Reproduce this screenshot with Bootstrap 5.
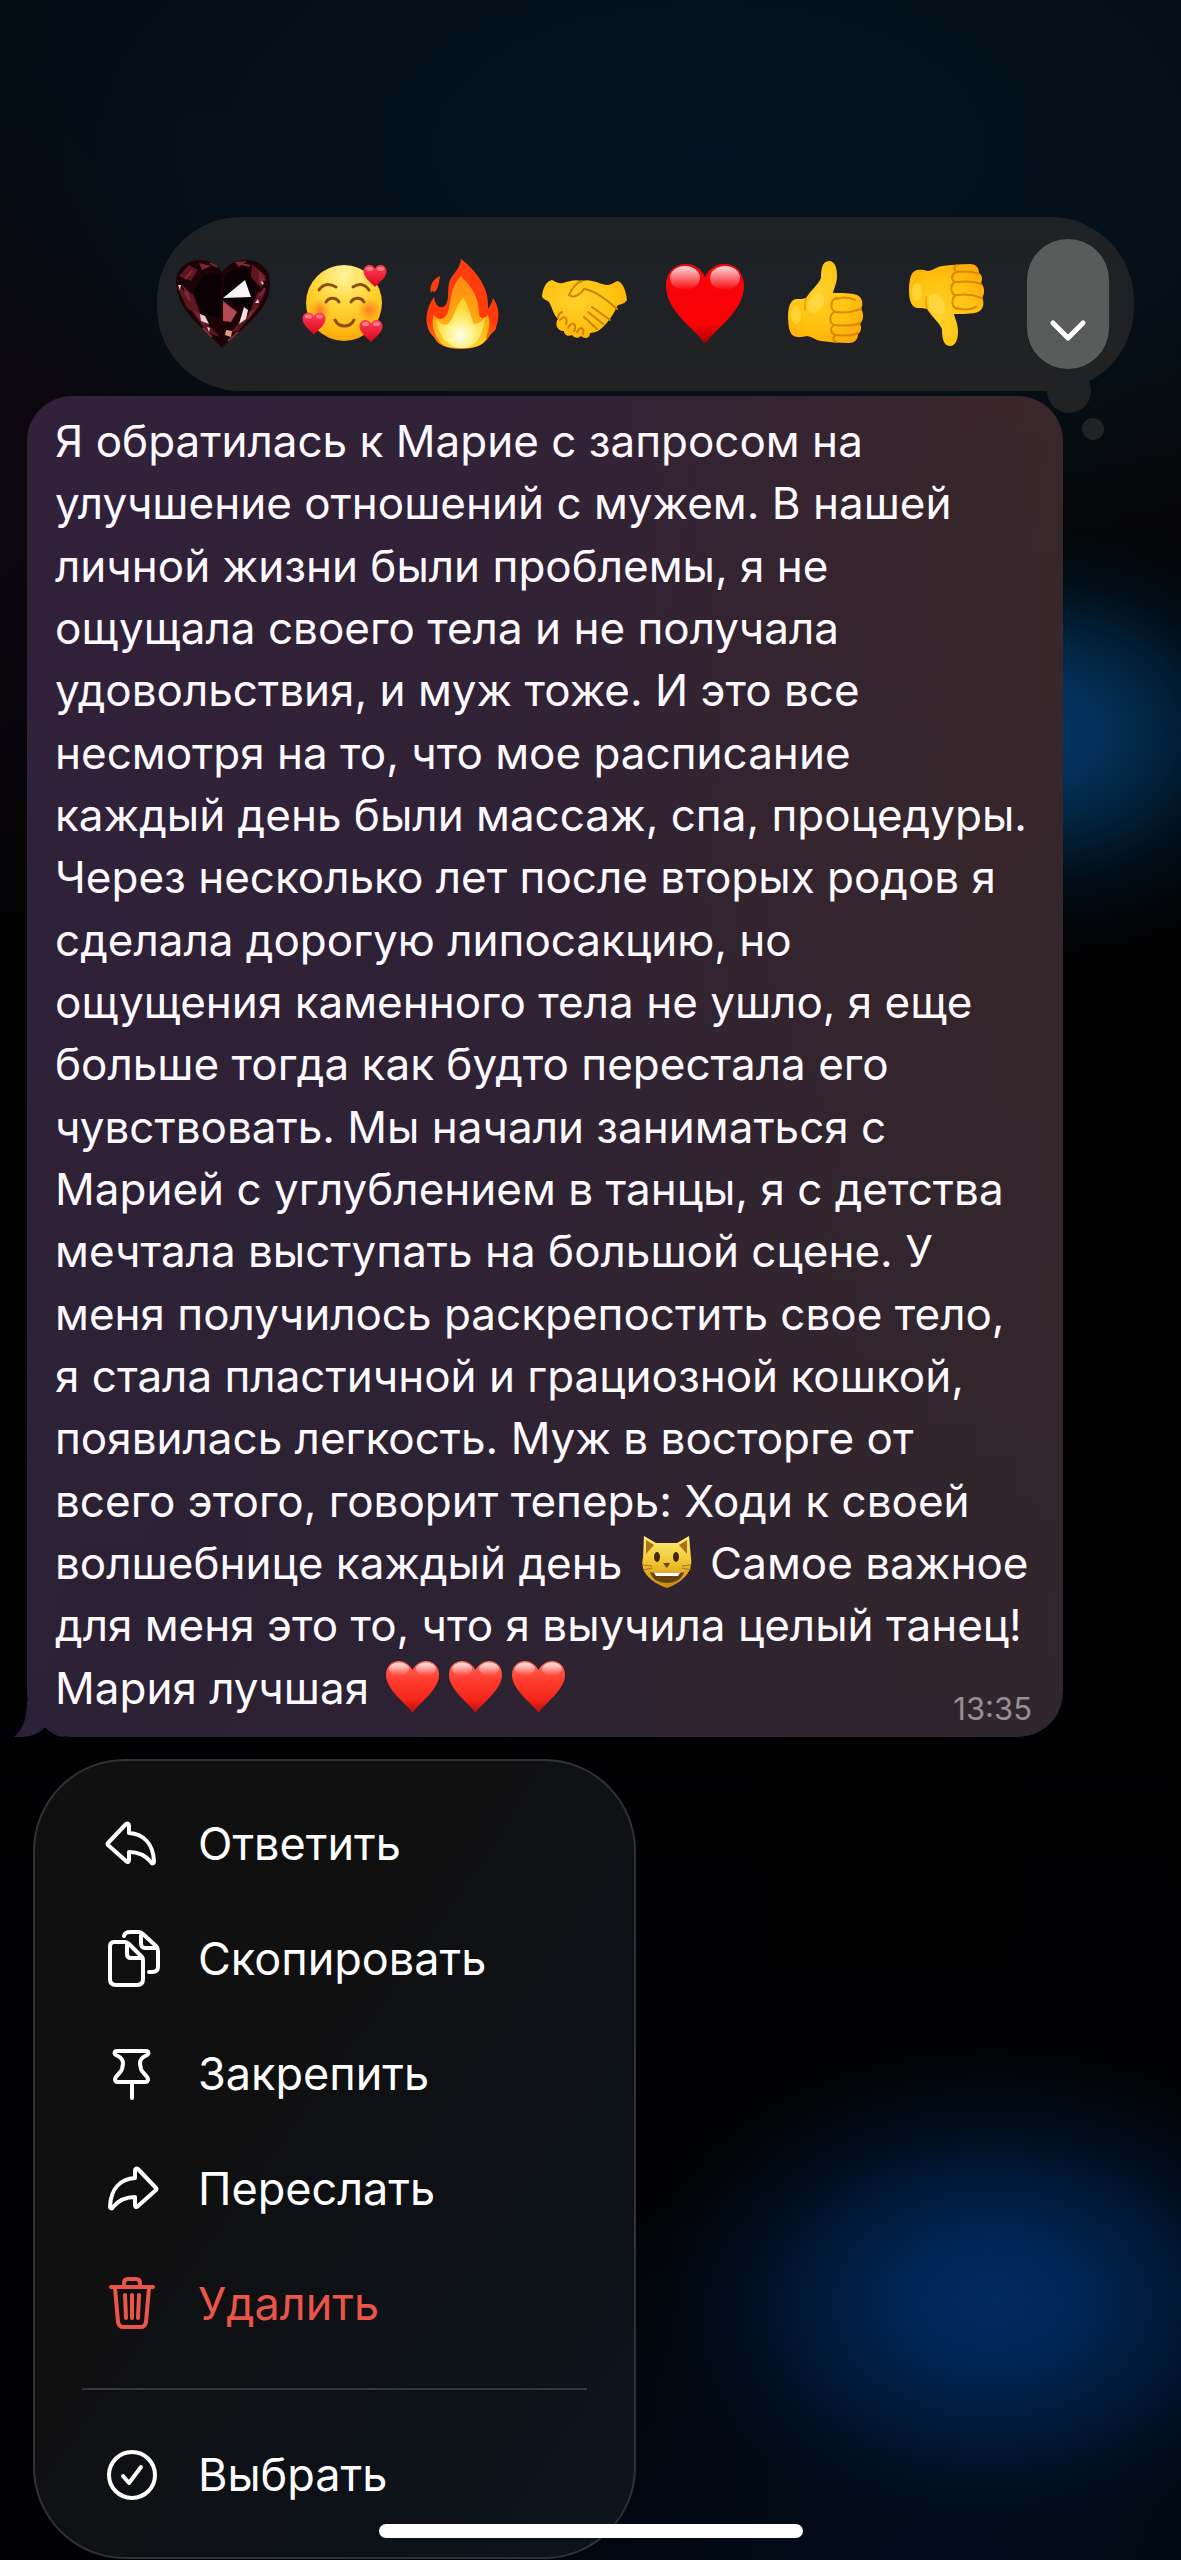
<!DOCTYPE html>
<html lang="ru" data-bs-theme="dark">
<head>
<meta charset="utf-8">
<meta name="viewport" content="width=device-width, initial-scale=1">
<title>Сообщение</title>
<link href="https://cdn.jsdelivr.net/npm/bootstrap@5.3.0/dist/css/bootstrap.min.css" rel="stylesheet">
<style>
body{font-family:Inter,"Noto Sans",sans-serif;color:#fcf9ff;background-color:#010103;
background-image:
radial-gradient(ellipse 380px 270px at 84% 2300px,#002b60 0%,rgba(0,40,90,.92) 24%,rgba(0,32,72,.75) 46%,rgba(0,22,48,.5) 66%,rgba(0,12,26,.25) 84%,transparent 100%),
radial-gradient(ellipse 700px 400px at 80% 2560px,#020d1c 0%,transparent 100%),
radial-gradient(ellipse 300px 230px at 88% 732px,#00365f 0%,#03305a 20%,rgba(2,38,66,.9) 42%,rgba(0,24,42,.6) 64%,rgba(0,10,20,.3) 84%,transparent 100%),
radial-gradient(ellipse 180px 420px at 0 520px,#0d0710 0%,transparent 100%),
radial-gradient(ellipse 820px 430px at 60% 150px,#04131f 0%,#04111b 50%,transparent 100%),
linear-gradient(#020a11 0,#070b10 260px,#08090b 400px,#020203 620px,#010103 100%)}
.screen{padding-top:217px}
.reactions{margin:0 47px 0 157px;height:174px;border-radius:84px;padding:0 25px 0 6px;background:linear-gradient(#1e2224,#1e2125 45%,#222223)}
.reactions::before,.reactions::after{content:"";position:absolute;border-radius:50%;background:#212223}
.reactions::before{width:44px;height:44px;right:43px;bottom:-22px}
.reactions::after{width:22px;height:22px;right:30px;bottom:-49px}
.reaction{background:none;border:0;padding:0;text-align:center}
.reaction svg{width:100px;height:100px}
.expand{width:82px;height:130px;border-radius:41px;background:#5a5b5b;border:0;padding:0 0 18px;margin-left:21px}
.bubble{margin:5px 118px 0 27px;padding:14px 31px 18px 28px;border-radius:45px;font-size:44px;
background:linear-gradient(rgba(38,34,54,0) 0,rgba(38,34,48,.5) 100%),linear-gradient(97deg,#31213a 0%,#322236 45%,#38262c 78%,#3a2929 100%)}
.bubble-line{display:block;line-height:62px;white-space:nowrap}
.bubble-line:nth-child(3n){line-height:63px}
.tail{left:-13px;bottom:0;width:56px;height:36px}
.emo{width:63px;height:54px;vertical-align:-10px}
.stamp{font-size:31px;line-height:20px;color:#988f94}
.menu{width:603px;margin:22px 0 0 33px;padding:25px 0 25px;border:2px solid #303336;border-radius:92px;
background:linear-gradient(125deg,#101011 40%,#0d1118 70%,#0d141b 100%)}
.menu-row{height:115px;padding:0 0 0 66px;gap:37px;border:0;background:none;color:#fff;font-size:45px;line-height:56px}
.menu-row svg{width:60px;height:60px;flex:none;fill:none;stroke:currentColor;stroke-width:4;stroke-linecap:round;stroke-linejoin:round}
.menu-row.delete{color:#ea5549}
.menu-rule{height:2px;background:#34373b;margin:27px 47px}
.home-bar{width:424px;height:14px;border-radius:7px;background:#fff;bottom:22px;left:50%;margin-left:-212px}
.hidden-defs{width:0;height:0}
</style>
<script src="https://cdn.jsdelivr.net/npm/bootstrap@5.3.0/dist/js/bootstrap.bundle.min.js"></script>
</head>
<body class="position-relative min-vh-100">
<svg class="hidden-defs position-absolute" aria-hidden="true">
<defs>
<radialGradient id="gface" cx=".5" cy=".12" r=".95"><stop offset="0" stop-color="#fff5a0"/><stop offset=".4" stop-color="#ffd83d"/><stop offset=".8" stop-color="#ffb90f"/><stop offset="1" stop-color="#f59a0a"/></radialGradient>
<radialGradient id="gblush"><stop offset="0" stop-color="#ff6a1c" stop-opacity=".85"/><stop offset="1" stop-color="#ff8a1c" stop-opacity="0"/></radialGradient>
<linearGradient id="gheart" x1="0" y1="0" x2="0" y2="1"><stop offset="0" stop-color="#ff4055"/><stop offset="1" stop-color="#d9061e"/></linearGradient>
<linearGradient id="gred" x1="0" y1="0" x2="0" y2="1"><stop offset="0" stop-color="#f5050c"/><stop offset=".75" stop-color="#fb0204"/><stop offset="1" stop-color="#a30308"/></linearGradient>
<linearGradient id="gsoft" x1="0" y1="0" x2="0" y2="1"><stop offset="0" stop-color="#ff6a5c"/><stop offset=".4" stop-color="#ff3a2c"/><stop offset=".75" stop-color="#f42518"/><stop offset="1" stop-color="#b3100c"/></linearGradient>
<linearGradient id="gshine" x1="0" y1="0" x2="0" y2="1"><stop offset="0" stop-color="#fff" stop-opacity=".85"/><stop offset="1" stop-color="#fff" stop-opacity="0"/></linearGradient>
<linearGradient id="gfire" x1="0" y1="0" x2="0" y2="1"><stop offset="0" stop-color="#ff3d12"/><stop offset=".7" stop-color="#ff3a08"/><stop offset="1" stop-color="#ff8a10"/></linearGradient>
<linearGradient id="gflame" x1="0" y1="0" x2="0" y2="1"><stop offset="0" stop-color="#ff8a12"/><stop offset=".6" stop-color="#ffa812"/><stop offset="1" stop-color="#ffd52a"/></linearGradient>
<radialGradient id="gcore" cx=".5" cy=".75" r=".6"><stop offset="0" stop-color="#fffef0"/><stop offset=".5" stop-color="#fff07a"/><stop offset="1" stop-color="#ffd42a"/></radialGradient>
<radialGradient id="ghand" cx=".4" cy=".35" r=".75"><stop offset="0" stop-color="#ffd02c"/><stop offset=".6" stop-color="#ffc30f"/><stop offset="1" stop-color="#ffa90a"/></radialGradient>
<linearGradient id="gcat" x1="0" y1="0" x2="0" y2="1"><stop offset="0" stop-color="#fff07c"/><stop offset=".5" stop-color="#f2c532"/><stop offset="1" stop-color="#c88616"/></linearGradient>
<symbol id="mini-heart" viewBox="0 0 24 24"><path d="M12 23C7 18 .5 13 .5 7.500 .5 3.500 3.300 1 6.500 1 9 1 11 2.500 12 4.600 13 2.500 15 1 17.500 1 20.700 1 23.500 3.500 23.500 7.500 23.500 13 17 18 12 23Z" fill="url(#gheart)"/><ellipse cx="6.500" cy="5" rx="3.500" ry="2" fill="#ff9aa5" opacity=".7"/><ellipse cx="17.500" cy="5" rx="3.500" ry="2" fill="#ff9aa5" opacity=".7"/></symbol>
<symbol id="text-heart" viewBox="0 0 63 54"><path d="M31.500 53C25 43 5 30 5 15 5 6 11 1 18 1c6 0 11 4 13.500 9C34 5 39 1 45 1c7 0 13 5 13 14 0 15-20 28-26.500 38Z" fill="url(#gsoft)"/><ellipse cx="18" cy="9" rx="10" ry="6.500" fill="url(#gshine)"/><ellipse cx="45" cy="9" rx="10" ry="6.500" fill="url(#gshine)"/></symbol>
<symbol id="thumb" viewBox="0 0 100 100">
<path d="M13 62C13 52 16 45 22 45 26 45 28 45 31 44 36 36 43 31 46 24 46 16 47 7 54 7 60 7 62 14 62 22 62 29 59 34 58 39 66 39 76 39 82 41 87 43 89 50 86 55 89 59 89 66 85 70 87 74 86 78 83 80 83 86 79 89 74 89 64 89 54 88 46 87 40 86 38 83 32 82 27 83 22 84 19 82 14 80 13 70 13 62Z" fill="url(#ghand)"/>
<path d="M61 44C54 47 56 57 61 58 69 59 78 58 86 55M59 58C54 61 54 70 60 71 69 72 78 72 85 69M59 71C54 74 56 80 61 81 69 82 77 82 83 79M61 81C57 83 58 87 61 88M61 45C67 43 74 43 80 46" fill="none" stroke="#d98a06" stroke-width="2" stroke-linecap="round"/>
<ellipse cx="21" cy="61" rx="5" ry="9" fill="#ffe04f" opacity=".55"/><ellipse cx="41" cy="49" rx="7" ry="11" transform="rotate(30 41 49)" fill="#ffe25a" opacity=".5"/><path d="M31 45c-2 4-1 7-1 11" stroke="#f3a50c" stroke-width="2" fill="none" stroke-linecap="round"/>
</symbol>
</defs>
</svg>

<main class="screen d-flex flex-column align-items-stretch">
<div class="reactions d-flex align-items-center position-relative" role="toolbar" aria-label="Реакции">
<button class="reaction flex-fill" type="button" aria-label="Сердце-кристалл"><svg viewBox="0 0 100 100">
<path d="M49 94C38 80 3 58 3 29 3 15 14 6 27 6c10 0 18 5 22 12C54 11 62 6 73 6c14 0 24 9 24 24 0 29-34 48-48 64Z" fill="#1b0307"/>
<path d="M6 22l10-11 9 5-7 11ZM4 33l16 7 9 24-15-10ZM18 44l15 24 14 15-13-5-16-22ZM79 10l14 12-5 12-10-11ZM93 36l-8 18-9 5 9-21ZM84 55L66 76 56 80 72 62Z" fill="#5e1720"/>
<path d="M8 30l8 8 1 7ZM26 9l12 3-9 4ZM86 16l7 10-7 4ZM62 8l12-1-8 6ZM20 56l10 6 2 10ZM76 58l8-5-9 13Z" fill="#7d2733"/>
<path d="M30 22l18-3v45L30 60 20 38ZM52 20l20-7 11 18-5 26-28-12Z" fill="#090104"/>
<path d="M50 44L72 26l6 17Z" fill="#f6f4f4"/><path d="M50 47l14 11-6 10-8-1Z" fill="#b34a55"/><path d="M71 53l4 3-2 9-7 5Z" fill="#f1dfdf"/>
<path d="M27 60l5 2 4 8-8-3ZM5 31l3 0-1 5ZM88 27l3 2-2 2ZM34 73l3 1-1 4ZM82 49l3-4 1 4Z" fill="#eacfcf"/><path d="M53 76l6 1-1 6-6-2Z" fill="#dda27a"/>
<path d="M12 25l7-8M17 47l-5-9M39 83l-9-9M44 13l-7-4M69 10l8 2M87 42l5-8M55 87l10-9" stroke="#7f2c38" stroke-width="2"/>
</svg></button>
<button class="reaction flex-fill" type="button" aria-label="Влюблённое лицо"><svg viewBox="0 0 100 100">
<circle cx="50" cy="49" r="38" fill="url(#gface)"/><circle cx="26" cy="56" r="11" fill="url(#gblush)"/><circle cx="75" cy="56" r="12" fill="url(#gblush)"/>
<path d="M25 36c4-6 10-7 17-3M59 33c6-4 12-3 16 3M32 48c3-5 10-5 13 0M57 48c3-5 10-5 13 0M41 66c4 8 15 8 19 0" fill="none" stroke="#8a4d0a" stroke-width="3" stroke-linecap="round"/>
<use href="#mini-heart" x="69" y="10" width="24" height="24"/><use href="#mini-heart" x="8" y="57" width="24" height="25"/><use href="#mini-heart" x="65" y="65" width="24" height="24"/></svg></button>
<button class="reaction flex-fill" type="button" aria-label="Огонь"><svg viewBox="0 0 100 100">
<path d="M47 5c9 7 19 17 24 30 3 8 3 13 3 20 3-4 4-8 5-11 6 8 7 19 3 29 1 3-6 7-7 10-5 8-15 12-28 12-14 0-24-4-27-12C10 74 10 57 20 43c1 7 4 11 9 10 8-4 3-17 7-27 4-8 10-11 11-21ZM26 22c-1 6-1 11-5 16-1-1-4-1-4 1-2-7 2-14 9-17Z" fill="url(#gfire)"/>
<path d="M47 22c10 10 18 20 18 38 1 5 5 5 9 1 4 10-1 17-2 24-4 8-13 9-24 9-12 0-20-1-24-9-5-9-7-15-4-24 3 4 6 5 10 3 9-7 2-26 17-42Z" fill="url(#gflame)"/>
<path d="M49 44c7 9 7 18 11 26 4 0 8-3 11-6-2 17-9 30-23 30S24 81 22 65c4 5 8 7 12 5 7-6 7-18 15-26Z" fill="url(#gcore)"/></svg></button>
<button class="reaction flex-fill" type="button" aria-label="Рукопожатие"><svg viewBox="0 0 100 100">
<path d="M8 42c1-8 4-15 10-16 4 2 7 4 11 3 6-2 12-4 19-2 9-3 16 3 26 4 6-1 7-4 10-4 6 3 8 11 9 19-2 4-7 4-10 6-2 6-8 15-13 20-4 4-8 7-14 7 0 6-6 6-9 3-3 3-7 2-9-1-4 2-8 0-8-4-6 1-10-7-6-12-5-5-6-12-9-17-2-2-7-3-7-6Z" fill="url(#ghand)"/>
<path d="M48 27c-7 2-10 8-13 14 5 4 12-1 15-6 11 1 23 11 33 20M58 53l18 13M54 58l15 12M50 63l13 12M26 66c4-5 8-3 6 4M34 74c3-7 10-5 6 3M43 78c3-6 8-4 6 2M24 64c0-3 2-5 4-6" fill="none" stroke="#cf8207" stroke-width="2" stroke-linecap="round"/></svg></button>
<button class="reaction flex-fill" type="button" aria-label="Сердце"><svg viewBox="0 0 100 100">
<path d="M50 90C38 73 11 57 11 32c0-14 9-22 20-22 9 0 16 6 19 13 3-7 10-13 19-13 11 0 20 8 20 22 0 25-27 41-39 58Z" fill="url(#gred)"/><ellipse cx="30" cy="24" rx="15" ry="12" fill="url(#gshine)"/><ellipse cx="70" cy="24" rx="15" ry="12" fill="url(#gshine)"/></svg></button>
<button class="reaction flex-fill" type="button" aria-label="Нравится"><svg viewBox="0 0 100 100"><use href="#thumb" width="100" height="100"/></svg></button>
<button class="reaction flex-fill" type="button" aria-label="Не нравится"><svg viewBox="0 0 100 100"><use href="#thumb" width="100" height="100" transform="matrix(1 0 0 -1 0 99)"/></svg></button>
<button class="expand d-flex align-items-end justify-content-center" type="button" aria-label="Ещё реакции"><svg width="40" height="42" viewBox="0 0 40 42"><path d="M5 14L20 29 35 14" fill="none" stroke="#fff" stroke-width="5" stroke-linecap="round" stroke-linejoin="round"/></svg></button>
</div>

<article class="bubble position-relative">
<svg class="tail position-absolute" viewBox="0 0 56 36" aria-hidden="true"><path d="M13 0C13 16 10 27 0 36 15 37 25 33 31 26 36 31 42 36 50 36L40 0Z" fill="#2b2136"/><path d="M31 27C36 32 42 36 50 36L56 37H8C18 36 26 33 31 27Z" fill="#010103"/></svg>
<span class="bubble-line">Я обратилась к Марие с запросом на</span>
<span class="bubble-line">улучшение отношений с мужем. В нашей</span>
<span class="bubble-line">личной жизни были проблемы, я не</span>
<span class="bubble-line">ощущала своего тела и не получала</span>
<span class="bubble-line">удовольствия, и муж тоже. И это все</span>
<span class="bubble-line">несмотря на то, что мое расписание</span>
<span class="bubble-line">каждый день были массаж, спа, процедуры.</span>
<span class="bubble-line">Через несколько лет после вторых родов я</span>
<span class="bubble-line">сделала дорогую липосакцию, но</span>
<span class="bubble-line">ощущения каменного тела не ушло, я еще</span>
<span class="bubble-line">больше тогда как будто перестала его</span>
<span class="bubble-line">чувствовать. Мы начали заниматься с</span>
<span class="bubble-line">Марией с углублением в танцы, я с детства</span>
<span class="bubble-line">мечтала выступать на большой сцене. У</span>
<span class="bubble-line">меня получилось раскрепостить свое тело,</span>
<span class="bubble-line">я стала пластичной и грациозной кошкой,</span>
<span class="bubble-line">появилась легкость. Муж в восторге от</span>
<span class="bubble-line">всего этого, говорит теперь: Ходи к своей</span>
<span class="bubble-line">волшебнице каждый день <svg class="emo" viewBox="0 0 63 54" role="img" aria-label="Кот"><path d="M8 23L9 1 21 8H42L54 1 56 23C58 34 51 46 32 53 12 46 5 34 8 23Z" fill="url(#gcat)"/><path d="M11 5l8 5-8 9ZM52 5l-8 5 8 9Z" fill="#ae7118"/><ellipse cx="22" cy="22" rx="3" ry="5" fill="#42270b"/><ellipse cx="41" cy="22" rx="3" ry="5" fill="#42270b"/><path d="M28 28h7l-3 5ZM15 37c10 3 24 3 34 0-2 7-8 11-17 11s-15-4-17-11Z" fill="#68430e"/><path d="M19 38l26 0-2 3-22 0Z" fill="#fff"/><path d="M8 30l9 1M8 35l9-2M56 30l-9 1M56 35l-9-2" stroke="#a57514"/></svg> Самое важное</span>
<span class="bubble-line">для меня это то, что я выучила целый танец!</span>
<span class="bubble-line d-flex justify-content-between align-items-end"><span>Мария лучшая <svg class="emo" role="img" aria-label="Сердце"><use href="#text-heart"/></svg><svg class="emo" role="img" aria-label="Сердце"><use href="#text-heart"/></svg><svg class="emo" role="img" aria-label="Сердце"><use href="#text-heart"/></svg></span><time class="stamp">13:35</time></span>
</article>

<nav class="menu d-flex flex-column" aria-label="Действия с сообщением">
<button class="menu-row d-flex align-items-center" type="button"><svg viewBox="0 0 60 60"><path d="M7 29L25 10C27 9 28 10 28 12V19C43 20 52 30 53 47 53 50 51 50 50 48 45 42 39 38 28 38V46C28 48 27 49 25 47L7 31Q6 30 7 29Z"/></svg>Ответить</button>
<button class="menu-row d-flex align-items-center" type="button"><svg viewBox="0 0 60 60"><path d="M13 13H24Q26 13 28 15L41 28Q42 29 42 32V50Q42 56 36 56H15Q9 56 9 50V18Q9 13 13 13ZM26 14V25Q26 29 30 29H41M23 7Q24 3 29 3H38Q40 3 42 5L55 17Q57 19 57 22V38Q57 43 51 43H48M40 4V14Q40 19 44 19H56"/></svg>Скопировать</button>
<button class="menu-row d-flex align-items-center" type="button"><svg viewBox="0 0 60 60"><path d="M16 7H45C48 7 48 10 46 11C40 14 39 16 39 20L40 25C41 29 46 31 47 35Q47 38 44 38H17Q14 38 14 35C15 31 20 29 21 25L22 20C22 16 21 14 15 11C13 10 13 7 16 7ZM31 38V54"/></svg>Закрепить</button>
<button class="menu-row d-flex align-items-center" type="button"><svg viewBox="0 0 60 60"><path d="M55 29L37 10C35 9 34 10 34 12V19C19 20 10 30 9 47 9 50 11 50 12 48 17 42 23 38 34 38V46C34 48 35 49 37 47L55 31Q56 30 55 29Z"/></svg>Переслать</button>
<button class="menu-row delete d-flex align-items-center" type="button"><svg viewBox="0 0 60 60"><path d="M10 13H52M23 12V9Q23 5 27 5H35Q39 5 39 9V12M14 14L17 48Q18 53 22 53H40Q44 53 45 48L48 14M24 21L25 44M31 21V44M38 21L37 44"/></svg>Удалить</button>
<div class="menu-rule" role="separator"></div>
<button class="menu-row d-flex align-items-center" type="button"><svg viewBox="0 0 60 60"><circle cx="31" cy="30" r="23"/><path d="M22 31L28 38 40 22"/></svg>Выбрать</button>
</nav>
</main>
<div class="home-bar position-absolute"></div>
</body>
</html>
